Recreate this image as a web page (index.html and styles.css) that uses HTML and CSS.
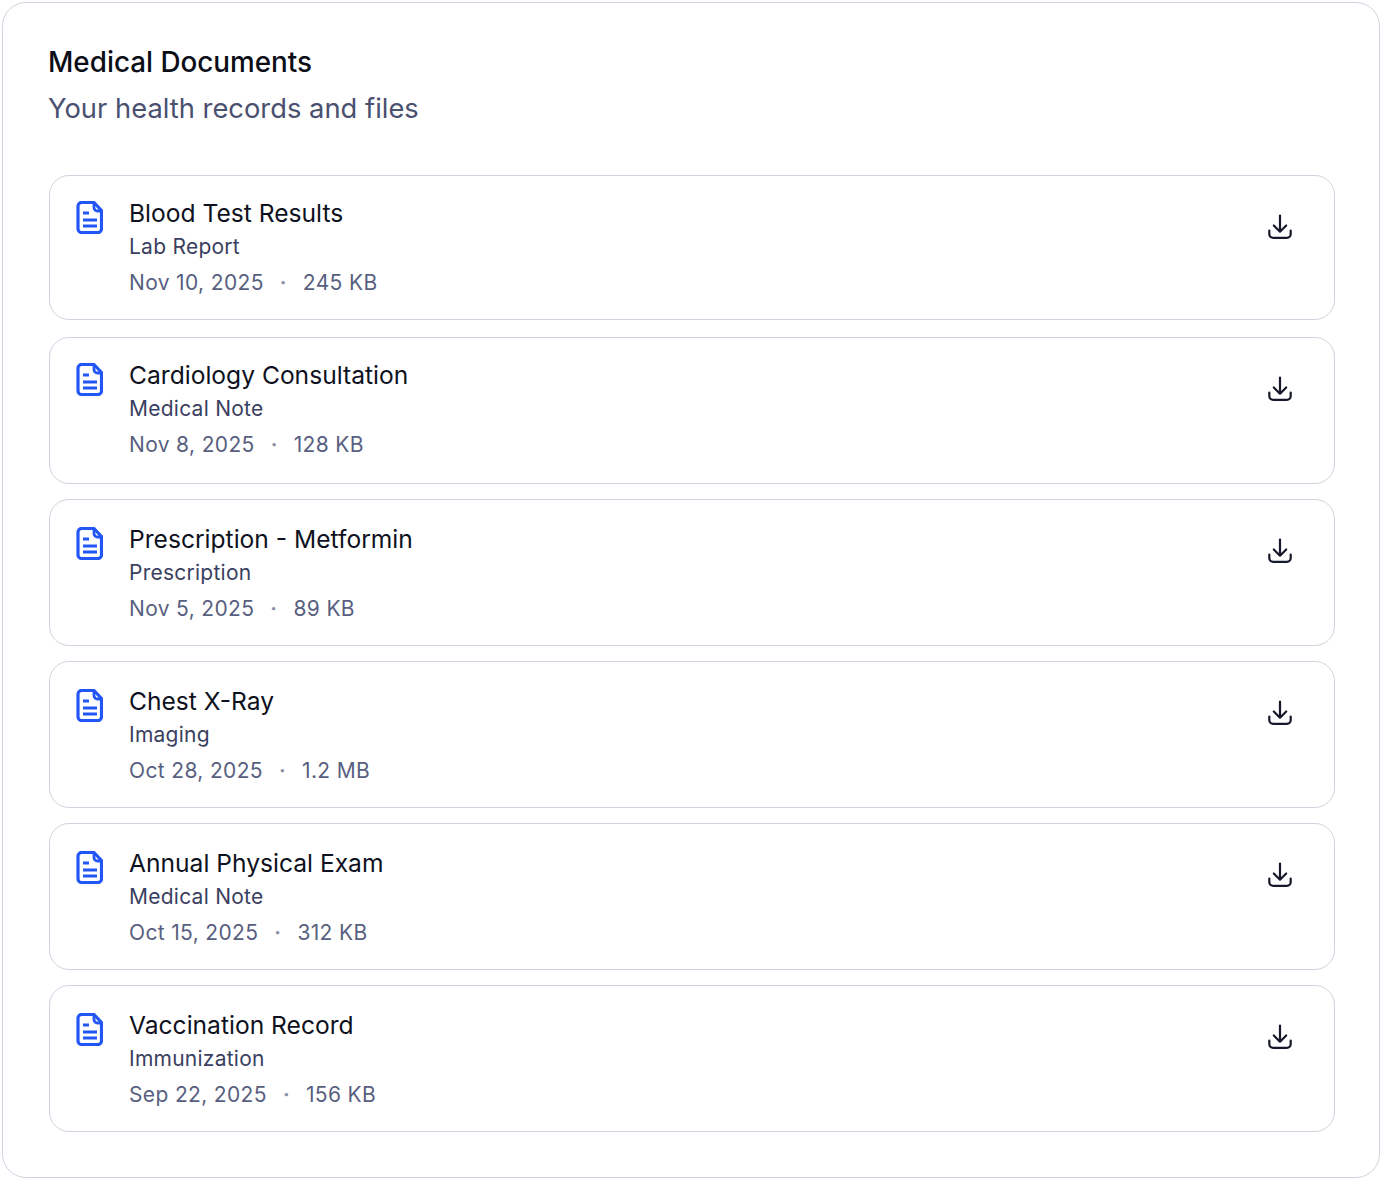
FILE: index.html
```html
<!DOCTYPE html>
<html lang="en">
<head>
<meta charset="utf-8">
<title>Medical Documents</title>
<link rel="stylesheet" href="styles.css">
</head>
<body>
<svg class="defs" width="0" height="0" aria-hidden="true">
  <symbol id="doc" viewBox="-0.5 0 27 33">
    <path d="M5 1.5H17.5L25 9.5V28A3.5 3.5 0 0 1 21.5 31.5H5A3.5 3.5 0 0 1 1.5 28V5A3.5 3.5 0 0 1 5 1.5Z" fill="none" stroke="currentColor" stroke-width="3.2" stroke-linejoin="round"/>
    <path d="M17.5 2V6.5A3.5 3.5 0 0 0 21 10H25" fill="none" stroke="currentColor" stroke-width="2.8" stroke-linejoin="round"/>
    <path d="M6.5 12H12.5M6.5 19H20.5M6.5 25H20.5" fill="none" stroke="currentColor" stroke-width="3"/>
  </symbol>
  <symbol id="dl" viewBox="0 0 24 25">
    <path d="M12 1.5V17M5.8 11.5L12 17.7L18.2 11.5" fill="none" stroke="currentColor" stroke-width="2.2" stroke-linecap="round" stroke-linejoin="round"/>
    <path d="M1.3 16.5V20A3.8 3.8 0 0 0 5.1 23.8H18.9A3.8 3.8 0 0 0 22.7 20V16.5" fill="none" stroke="currentColor" stroke-width="2.2" stroke-linecap="round"/>
  </symbol>
</svg>
<main class="panel">
  <header class="panel-head">
    <h1 class="panel-title">Medical Documents</h1>
    <p class="panel-sub">Your health records and files</p>
  </header>
  <ul class="doc-list">
    <li class="doc">
      <svg class="doc-icon"><use href="#doc"/></svg>
      <div class="doc-body">
        <div class="doc-name">Blood Test Results</div>
        <div class="doc-type">Lab Report</div>
        <div class="doc-meta"><span>Nov 10, 2025</span><span class="dot">·</span><span>245 KB</span></div>
      </div>
      <svg class="dl-icon"><use href="#dl"/></svg>
    </li>
    <li class="doc">
      <svg class="doc-icon"><use href="#doc"/></svg>
      <div class="doc-body">
        <div class="doc-name">Cardiology Consultation</div>
        <div class="doc-type">Medical Note</div>
        <div class="doc-meta"><span>Nov 8, 2025</span><span class="dot">·</span><span>128 KB</span></div>
      </div>
      <svg class="dl-icon"><use href="#dl"/></svg>
    </li>
    <li class="doc">
      <svg class="doc-icon"><use href="#doc"/></svg>
      <div class="doc-body">
        <div class="doc-name">Prescription - Metformin</div>
        <div class="doc-type">Prescription</div>
        <div class="doc-meta"><span>Nov 5, 2025</span><span class="dot">·</span><span>89 KB</span></div>
      </div>
      <svg class="dl-icon"><use href="#dl"/></svg>
    </li>
    <li class="doc">
      <svg class="doc-icon"><use href="#doc"/></svg>
      <div class="doc-body">
        <div class="doc-name">Chest X-Ray</div>
        <div class="doc-type">Imaging</div>
        <div class="doc-meta"><span>Oct 28, 2025</span><span class="dot">·</span><span>1.2 MB</span></div>
      </div>
      <svg class="dl-icon"><use href="#dl"/></svg>
    </li>
    <li class="doc">
      <svg class="doc-icon"><use href="#doc"/></svg>
      <div class="doc-body">
        <div class="doc-name">Annual Physical Exam</div>
        <div class="doc-type">Medical Note</div>
        <div class="doc-meta"><span>Oct 15, 2025</span><span class="dot">·</span><span>312 KB</span></div>
      </div>
      <svg class="dl-icon"><use href="#dl"/></svg>
    </li>
    <li class="doc">
      <svg class="doc-icon"><use href="#doc"/></svg>
      <div class="doc-body">
        <div class="doc-name">Vaccination Record</div>
        <div class="doc-type">Immunization</div>
        <div class="doc-meta"><span>Sep 22, 2025</span><span class="dot">·</span><span>156 KB</span></div>
      </div>
      <svg class="dl-icon"><use href="#dl"/></svg>
    </li>
  </ul>
</main>
</body>
</html>
```
FILE: styles.css
```css
* { box-sizing: border-box; }
html, body { margin: 0; padding: 0; background: #fff; }
body { padding: 2px 4px 2px 2px; font-family: Inter, "Liberation Sans", sans-serif; height: 1180px; overflow: hidden; }
.defs { position: absolute; }
.panel { height: 1176px; border: 1px solid #d2d3df; border-radius: 24px; padding: 42px 44px 0 45px; background: #fff; }
.panel-head { height: 130px; }
.panel-title { margin: 0; font-size: 27.8px; line-height: 34px; font-weight: 500; color: #0b0d17; }
.panel-sub { margin: 13px 0 0; font-size: 27.35px; line-height: 34px; font-weight: 400; color: #4a5070; }
.doc-list { list-style: none; margin: 0 0 0 1px; padding: 0; display: flex; flex-direction: column; gap: 15px; }
.doc { height: 147px; border: 1px solid #d2d3df; border-radius: 20px; padding: 25px 42px 0 26px; display: flex; align-items: flex-start; }
.doc:nth-child(-n+2) { padding-top: 23px; }
.doc:first-child { height: 145px; margin-bottom: 2px; }
.doc-icon { width: 27px; height: 33px; color: #2356f6; margin-top: 2px; flex: none; }
.doc-body { flex: 1; margin-left: 26px; }
.doc-name { font-size: 24.6px; line-height: 28px; color: #0e1120; }
.doc-type { margin-top: 6px; font-size: 21px; line-height: 28px; letter-spacing: 0.25px; color: #3a4060; }
.doc-meta { margin-top: 8px; font-size: 21px; line-height: 28px; letter-spacing: 0.35px; color: #585f80; display: flex; gap: 16px; }
.dot { color: #8a8fa8; font-weight: 600; }
.dl-icon { width: 24px; height: 25px; color: #15182b; margin-top: 13px; flex: none; }
.doc:nth-child(-n+2) .dl-icon { margin-top: 15px; }
```
